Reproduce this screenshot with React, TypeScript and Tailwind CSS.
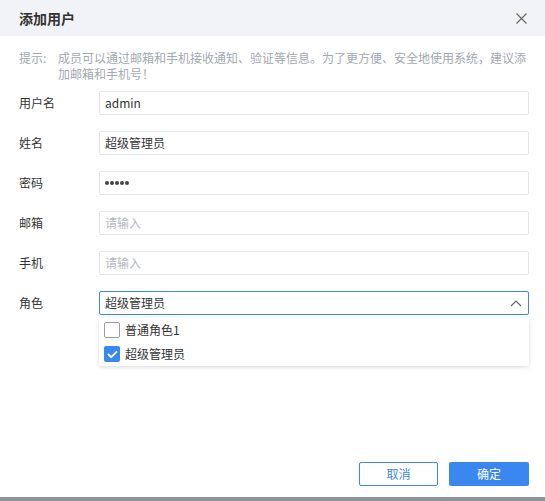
import React from "react";

const font = { fontFamily: '"Noto Sans CJK SC", "Noto Sans", sans-serif' };

function Row({ label, children }: { label: string; children: React.ReactNode }) {
  return (
    <div className="flex items-center h-6">
      <div className="w-[80px] shrink-0 text-[12px] text-[#333]">{label}</div>
      <div className="flex-1 relative">{children}</div>
    </div>
  );
}

function Input({ value, placeholder }: { value?: string; placeholder?: string }) {
  return (
    <div className="h-6 border border-[#e3e5e9] rounded-[2px] bg-white flex items-center px-[5px] text-[12px]">
      {value ? <span className="text-[#333]">{value}</span> : <span className="text-[#b4b8bf]">{placeholder}</span>}
    </div>
  );
}

function Checkbox({ checked }: { checked: boolean }) {
  return checked ? (
    <span className="w-4 h-4 rounded-[2px] bg-[#3b87f0] flex items-center justify-center">
      <svg width="11" height="9" viewBox="0 0 11 9" fill="none">
        <path d="M1.5 4.5L4.2 7.2L9.5 1.8" stroke="white" strokeWidth="1.8" strokeLinecap="round" strokeLinejoin="round" />
      </svg>
    </span>
  ) : (
    <span className="w-4 h-4 rounded-[2px] border border-[#9a9ea6] bg-white" />
  );
}

export default function App() {
  return (
    <div className="w-[545px] h-[501px] flex flex-col bg-white" style={font}>
      <div className="flex-1 flex flex-col">
        <div className="h-9 bg-[#f2f3f6] flex items-center justify-between pl-[19px] pr-[18px]">
          <span className="text-[14px] font-bold text-[#333]">添加用户</span>
          <svg width="11" height="11" viewBox="0 0 11 11">
            <path d="M0.5 0.5L10.5 10.5M10.5 0.5L0.5 10.5" stroke="#666" strokeWidth="1.1" />
          </svg>
        </div>
        <div className="flex-1 pl-[19px] pr-[16px] pt-[14px]">
          <div className="flex text-[12px] leading-[16px] text-[#a3a8b1]">
            <span className="w-[39px] shrink-0">提示:</span>
            <span className="flex-1">成员可以通过邮箱和手机接收通知、验证等信息。为了更方便、安全地使用系统，建议添加邮箱和手机号！</span>
          </div>
          <div className="mt-[9px] flex flex-col gap-4">
            <Row label="用户名"><Input value="admin" /></Row>
            <Row label="姓名"><Input value="超级管理员" /></Row>
            <Row label="密码">
              <div className="h-6 border border-[#e3e5e9] rounded-[2px] bg-white flex items-center px-[5px] gap-[1.5px]">
                {[0, 1, 2, 3, 4].map((i) => (
                  <span key={i} className="w-[3.5px] h-[3.5px] rounded-full bg-[#444]" />
                ))}
              </div>
            </Row>
            <Row label="邮箱"><Input placeholder="请输入" /></Row>
            <Row label="手机"><Input placeholder="请输入" /></Row>
            <Row label="角色">
              <div className="h-6 border border-[#3b87f0] rounded-[2px] bg-white flex items-center justify-between pl-[5px] pr-[6px] text-[12px] text-[#333]">
                <span>超级管理员</span>
                <svg width="12" height="7" viewBox="0 0 12 7" fill="none">
                  <path d="M1 6L6 1L11 6" stroke="#666" strokeWidth="1.2" />
                </svg>
              </div>
              <div className="absolute left-0 right-0 top-full mt-[3px] bg-white rounded-[2px] shadow-[0_1px_4px_rgba(0,0,0,0.15)] z-10">
                <div className="h-6 flex items-center pl-[5px] gap-[5px] text-[12px] text-[#333]">
                  <Checkbox checked={false} />
                  <span>普通角色1</span>
                </div>
                <div className="h-6 flex items-center pl-[5px] gap-[5px] text-[12px] text-[#333]">
                  <Checkbox checked={true} />
                  <span>超级管理员</span>
                </div>
              </div>
            </Row>
          </div>
        </div>
        <div className="flex justify-end gap-[11px] pr-[16px] pb-[11px]">
          <button className="w-[79px] h-6 border border-[#3b87f0] rounded-[2px] bg-white text-[12px] text-[#3b87f0]">取消</button>
          <button className="w-[80px] h-6 rounded-[2px] bg-[#3b87f0] text-[12px] text-white">确定</button>
        </div>
      </div>
      <div className="h-[4px] bg-[#8e9299]" />
    </div>
  );
}
